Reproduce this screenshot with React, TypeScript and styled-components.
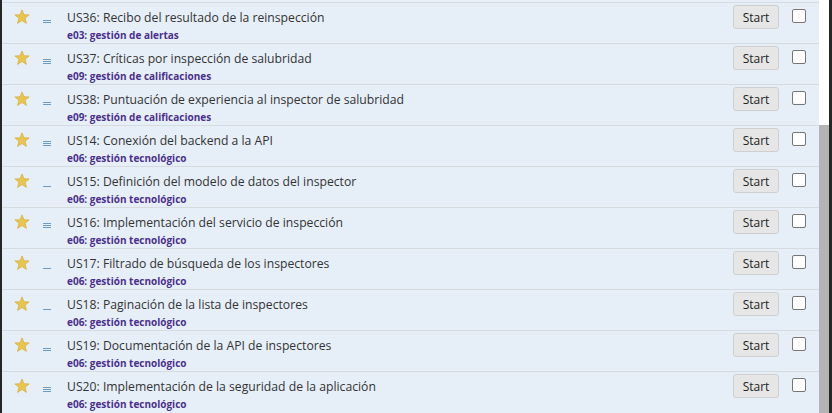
import React from "react";
import styled, { createGlobalStyle } from "styled-components";

const Global = createGlobalStyle`
  html, body { margin: 0; padding: 0; background: #e6eff8; overflow: hidden; }
  * { box-sizing: border-box; }
`;

type Story = { id: string; title: string; epic: string; prio: 1 | 2 | 3 };

const stories: Story[] = [
  { id: "US36", title: "Recibo del resultado de la reinspección", epic: "e03: gestión de alertas", prio: 2 },
  { id: "US37", title: "Críticas por inspección de salubridad", epic: "e09: gestión de calificaciones", prio: 3 },
  { id: "US38", title: "Puntuación de experiencia al inspector de salubridad", epic: "e09: gestión de calificaciones", prio: 2 },
  { id: "US14", title: "Conexión del backend a la API", epic: "e06: gestión tecnológico", prio: 3 },
  { id: "US15", title: "Definición del modelo de datos del inspector", epic: "e06: gestión tecnológico", prio: 1 },
  { id: "US16", title: "Implementación del servicio de inspección", epic: "e06: gestión tecnológico", prio: 3 },
  { id: "US17", title: "Filtrado de búsqueda de los inspectores", epic: "e06: gestión tecnológico", prio: 1 },
  { id: "US18", title: "Paginación de la lista de inspectores", epic: "e06: gestión tecnológico", prio: 1 },
  { id: "US19", title: "Documentación de la API de inspectores", epic: "e06: gestión tecnológico", prio: 2 },
  { id: "US20", title: "Implementación de la seguridad de la aplicación", epic: "e06: gestión tecnológico", prio: 3 },
];

const Page = styled.div`
  display: flex;
  width: 832px;
  height: 413px;
  overflow: hidden;
`;

const Edge = styled.div<{ $w: number }>`
  width: ${(p) => p.$w}px;
  flex: none;
  background: #262626;
`;

const List = styled.div`
  flex: 1;
  padding-top: 2px;
  background: #e6eff8;
  font-family: "Open Sans", "Liberation Sans", sans-serif;
`;

const Row = styled.div`
  display: flex;
  align-items: flex-start;
  height: 41px;
  border-top: 1px solid #d6dbe0;
  padding-left: 12px;
  padding-right: 13px;
`;

const StarBox = styled.div`
  width: 16px;
  height: 16px;
  margin-top: 5px;
  flex: none;
`;

const PrioBox = styled.div`
  width: 9px;
  height: 20px;
  margin-left: 13px;
  flex: none;
  display: flex;
  flex-direction: column;
  justify-content: flex-end;
  gap: 1px;
`;

const PrioLine = styled.div`
  height: 1px;
  width: 8px;
  background: #6b9cc6;
`;

const Text = styled.div`
  flex: 1;
  margin-left: 15px;
  padding-top: 6px;
  min-width: 0;
`;

const Title = styled.div`
  font-size: 12.2px;
  line-height: 18px;
  color: #333;
  white-space: nowrap;
`;

const Epic = styled.div`
  margin-top: 1px;
  font-size: 10px;
  font-weight: 700;
  line-height: 14px;
  color: #4b2f8c;
  white-space: nowrap;
`;

const StartButton = styled.button`
  flex: none;
  margin-top: 2px;
  width: 46px;
  height: 24px;
  padding: 0;
  border: 1px solid #cfcfcf;
  border-radius: 3px;
  background: #e6e6e6;
  color: #222;
  font-family: "Open Sans", "Liberation Sans", sans-serif;
  font-size: 12px;
  cursor: pointer;
`;

const Check = styled.input.attrs({ type: "checkbox" })`
  flex: none;
  appearance: none;
  width: 14px;
  height: 14px;
  margin: 6px 0 0 13px;
  background: #fff;
  border: 1px solid #767676;
  border-radius: 2px;
`;

const Scrollbar = styled.div`
  width: 10px;
  flex: none;
  display: flex;
  flex-direction: column;
  background: #fff;
`;

const Thumb = styled.div`
  margin-top: 125px;
  flex: 1;
  background: #b4b4b4;
`;

const Star = () => (
  <svg width="16" height="16" viewBox="0 0 18 18">
    <polygon
      points="9,1 11.2,6.4 17,6.7 12.5,10.4 14,16.2 9,13 4,16.2 5.5,10.4 1,6.7 6.8,6.4"
      fill="#e8c64d"
      stroke="#d6ad3a"
      strokeWidth="0.8"
      strokeLinejoin="round"
    />
  </svg>
);

export default function App() {
  return (
    <>
      <Global />
      <Page>
        <Edge $w={2} />
        <List>
          {stories.map((s) => (
            <Row key={s.id}>
              <StarBox>
                <Star />
              </StarBox>
              <PrioBox>
                {Array.from({ length: s.prio }).map((_, i) => (
                  <PrioLine key={i} />
                ))}
              </PrioBox>
              <Text>
                <Title>
                  {s.id}: {s.title}
                </Title>
                <Epic>{s.epic}</Epic>
              </Text>
              <StartButton>Start</StartButton>
              <Check />
            </Row>
          ))}
        </List>
        <Scrollbar>
          <Thumb />
        </Scrollbar>
        <Edge $w={3} />
      </Page>
    </>
  );
}
